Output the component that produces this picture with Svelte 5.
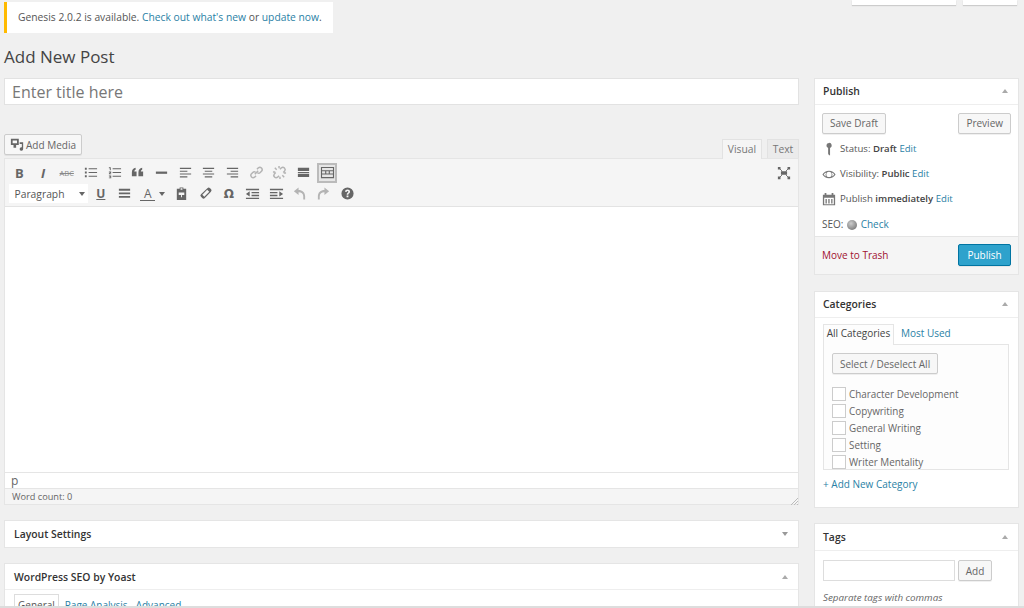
<script>
  const linkPath = 'M6.2 9.800l3.600-3.600M8.500 4.500 10 3a2.500 2.500 0 0 1 3.500 3.500L12 8a2.500 2.500 0 0 1-3 .4M7.500 11.500 6 13a2.500 2.500 0 0 1-3.500-3.500L4 8a2.500 2.500 0 0 1 3-.4';
  const unlinkPath = 'M8.500 4.500 10 3a2.500 2.500 0 0 1 3.500 3.500L12 8M7.500 11.500 6 13a2.500 2.500 0 0 1-3.500-3.500L4 8M3 3l2 2M11 11l2 2M7.500 1v2.500M8.500 12.500V15M1 7.500h2.500M12.500 8.500H15';

  const rowOne = [
    { text: 'B', cls: 'bold' },
    { text: 'I', cls: 'ital' },
    { text: 'ABC', cls: 'strike' },
    { d: 'M2 3h2v2H2zM6 3.500h9v1H6zM2 7h2v2H2zM6 7.500h9v1H6zM2 11h2v2H2zM6 11.500h9v1H6z' },
    { d: 'M2 2.500h2v3H3v-2H2zM6 3.500h9v1H6zM2 7h2.500v1.200L3.200 9h1.300v.8H2V9l1.400-1H2zM6 7.500h9v1H6zM2 11.200h2.500V14H2v-.7h1.600v-.4H2.600v-.6h1v-.4H2zM6 11.500h9v1H6z' },
    { d: 'M2 8c0-3 1.500-4.600 4-5v2C5 5.300 4.600 6 4.600 7H7v5H2zM9 8c0-3 1.500-4.600 4-5v2c-1 .3-1.400 1-1.400 2H14v5H9z' },
    { d: 'M2 7h12v2.400H2z' },
    { d: 'M2 3h12v1.200H2zM2 6h8v1.200H2zM2 9h12v1.200H2zM2 12h8v1.200H2z' },
    { d: 'M2 3h12v1.200H2zM4 6h8v1.200H4zM2 9h12v1.200H2zM4 12h8v1.200H4z' },
    { d: 'M2 3h12v1.200H2zM6 6h8v1.200H6zM2 9h12v1.200H2zM6 12h8v1.200H6z' },
    { line: linkPath },
    { line: unlinkPath },
    { d: 'M2 3h12v3.500H2zM2 7.400h12v1H2zM2 9.400h12v3.500H2z' },
    { d: 'M1 2h14v12H1zM2.200 3.200v2.300h11.600V3.200zM2.200 6.700v2.300h3.300V6.700zM6.700 6.700v2.300h2.600V6.700zM10.500 6.700v2.300h3.300V6.700zM2.200 10.200v2.600h11.600v-2.600z', active: true }
  ];

  const rowTwo = [
    { text: 'U', cls: 'under' },
    { d: 'M2 3h12v2H2zM2 6.800h12v2H2zM2 10.600h12v2H2z' },
    { text: 'A', cls: 'color', caret: true },
    { d: 'M6 1.500h4V3h3v12H3V3h3zM7 2.500V4h2V2.500zM5 7v2.500h2.500V12h1V9.500H11V7z' },
    { d: 'M10 2.300a2 2 0 0 1 2.800 0l1 1a2 2 0 0 1 0 2.800l-6.500 6.700a2 2 0 0 1-2.800 0l-1.300-1.300a2 2 0 0 1 0-2.800zM9.800 4 4.600 9.400l2.100 2 5.300-5.300z' },
    { text: 'Ω', cls: 'omega' },
    { d: 'M1 3h14v1.400H1zM7 6.400h8v1.400H7zM7 9.400h8v1.400H7zM1 12.400h14v1.400H1zM5 5.600v5.600L1 8.400z' },
    { d: 'M1 3h14v1.400H1zM1 6.400h8v1.400H1zM1 9.400h8v1.400H1zM1 12.400h14v1.400H1zM11 5.600v5.600l4-2.800z' },
    { d: 'M2 5.500 7 1.500v2.800c4 0 7 2.500 7 6.700v3.500h-2V11c0-2.700-2-4.300-5-4.300v3z', off: true },
    { d: 'M14 5.500 9 1.500v2.800c-4 0-7 2.500-7 6.700v3.500h2V11c0-2.700 2-4.300 5-4.300v3z', off: true },
    { d: 'M8 1.500a6.500 6.500 0 1 0 0 13 6.500 6.500 0 0 0 0-13zM7 10.200h2V12H7zM5.400 6.200C5.500 4.600 6.500 3.800 8 3.800c1.600 0 2.700.9 2.700 2.200 0 1-.5 1.500-1.200 2-.5.400-.6.600-.6 1.400H7.200c0-1.200.2-1.700 1-2.300.5-.4.700-.6.700-1 0-.4-.3-.7-.9-.7-.6 0-.9.300-1 1z' }
  ];

  const categories = ['Character Development', 'Copywriting', 'General Writing', 'Setting', 'Writer Mentality'];
</script>

<div class="page">
  <div class="screen-meta">
    <span class="meta-tab first"></span>
    <span class="meta-tab second"></span>
  </div>

  <div class="notice">
    Genesis 2.0.2 is available. <a href="#a">Check out what's new</a> or <a href="#b">update now</a>.
  </div>

  <h1>Add New Post</h1>

  <div class="columns">
    <main class="main-col">
      <div class="title-input">Enter title here</div>

      <div class="media-row">
        <button class="btn media-btn">
          <svg viewBox="0 0 16 16" width="16" height="16"><path fill="#666" fill-rule="evenodd" d="M1 1h9v7H7v3H4V8H1zM3 3v3h5V3zM11 5h4v7.500a2 2 0 1 1-1.500-1.900V7H11z"/></svg>
          Add Media
        </button>
        <div class="tabs">
          <span class="tab on">Visual</span>
          <span class="tab">Text</span>
        </div>
      </div>

      <section class="editor">
        <div class="toolbar">
          <div class="tb-row">
            {#each rowOne as b}
              <span class="tb" class:active={b.active} class:off={b.line}>
                {#if b.text}
                  <span class={b.cls}>{b.text}</span>
                {:else if b.line}
                  <svg viewBox="0 0 16 16" width="15" height="15"><path class="chain" d={b.line}/></svg>
                {:else}
                  <svg viewBox="0 0 16 16" width="15" height="15"><path fill-rule="evenodd" d={b.d}/></svg>
                {/if}
              </span>
            {/each}
            <span class="tb fullscreen">
              <svg viewBox="0 0 16 16" width="14" height="14"><path d="M1 1h3v3H1zM12 1h3v3h-3zM1 12h3v3H1zM12 12h3v3h-3zM4.500 6h7v4h-7z"/><path d="M3 3l3 3M13 3l-3 3M3 13l3-3M13 13l-3-3" stroke="#666" stroke-width="1"/></svg>
            </span>
          </div>
          <div class="tb-row">
            <span class="select">Paragraph<i class="caret"></i></span>
            <span class="tb-gap"></span>
            {#each rowTwo as b}
              <span class="tb" class:off={b.off} class:wide={b.caret}>
                {#if b.text}
                  <span class={b.cls}>{b.text}</span>
                  {#if b.caret}<i class="caret small"></i>{/if}
                {:else}
                  <svg viewBox="0 0 16 16" width="15" height="15"><path fill-rule="evenodd" d={b.d}/></svg>
                {/if}
              </span>
            {/each}
          </div>
        </div>
        <div class="edit-area"></div>
        <div class="path-row">p</div>
        <div class="status-row">
          Word count: 0
          <svg class="grip" viewBox="0 0 8 8" width="8" height="8"><path d="M8 1 1 8M8 4 4 8M8 7 7 8" stroke="#bbb" stroke-width="1"/></svg>
        </div>
      </section>

      <section class="box layout-box">
        <header class="box-head"><h2>Layout Settings</h2><i class="arrow down"></i></header>
      </section>

      <section class="box">
        <header class="box-head lined"><h2>WordPress SEO by Yoast</h2><i class="arrow"></i></header>
        <div class="seo-tabs">
          <span class="seo-tab on">General</span>
          <a href="#c">Page Analysis</a>
          <a href="#d">Advanced</a>
        </div>
      </section>
    </main>

    <aside class="side-col">
      <section class="box publish">
        <header class="box-head lined"><h2>Publish</h2><i class="arrow"></i></header>
        <div class="pub-buttons">
          <button class="btn">Save Draft</button>
          <button class="btn">Preview</button>
        </div>
        <div class="pub-row">
          <svg viewBox="0 0 16 16" width="14" height="14"><path d="M8 1a3 3 0 0 1 1.200 5.800V15H8l-1-1.500V6.800A3 3 0 0 1 8 1z"/></svg>
          <span>Status: <b>Draft</b> <a href="#e">Edit</a></span>
        </div>
        <div class="pub-row">
          <svg viewBox="0 0 16 16" width="14" height="14"><path fill-rule="evenodd" d="M0.500 8.500C2 5.800 4.800 4.200 8 4.200s6 1.600 7.500 4.300C14 11.200 11.200 12.800 8 12.800S2 11.200.5 8.500zM8 5.500a3 3 0 1 0 0 6 3 3 0 0 0 0-6zM2 8.500c.7 1 1.700 1.800 2.800 2.300a4.500 4.500 0 0 1 0-4.600C3.700 6.700 2.700 7.500 2 8.500zM14 8.500c-.7-1-1.700-1.800-2.800-2.300a4.500 4.500 0 0 1 0 4.600c1.100-.5 2.100-1.300 2.800-2.300z"/></svg>
          <span>Visibility: <b>Public</b> <a href="#f">Edit</a></span>
        </div>
        <div class="pub-row">
          <svg viewBox="0 0 16 16" width="14" height="14"><path fill-rule="evenodd" d="M3 1h2v2h6V1h2v2h2v12H1V3h2zM2.500 6.500V14h11V6.500zM4 8h1.500v5H4zM7.200 8h1.500v5H7.200zM10.500 8H12v5h-1.500z"/></svg>
          <span>Publish <b>immediately</b> <a href="#g">Edit</a></span>
        </div>
        <div class="pub-row seo">
          <span>SEO: <i class="ball"></i> <a href="#h">Check</a></span>
        </div>
        <div class="pub-foot">
          <a class="trash" href="#i">Move to Trash</a>
          <button class="btn primary">Publish</button>
        </div>
      </section>

      <section class="box cats">
        <header class="box-head lined"><h2>Categories</h2><i class="arrow"></i></header>
        <div class="cat-body">
          <div class="cat-tabs">
            <span class="cat-tab on">All Categories</span>
            <a href="#j">Most Used</a>
          </div>
          <div class="cat-panel">
            <button class="btn select-all">Select / Deselect All</button>
            <ul>
              {#each categories as c}
                <li><span class="check"></span>{c}</li>
              {/each}
            </ul>
          </div>
          <a class="add-cat" href="#k">+ Add New Category</a>
        </div>
      </section>

      <section class="box tags">
        <header class="box-head lined"><h2>Tags</h2><i class="arrow"></i></header>
        <div class="tag-body">
          <div class="tag-row">
            <span class="tag-input"></span>
            <button class="btn">Add</button>
          </div>
          <em>Separate tags with commas</em>
        </div>
      </section>
    </aside>
  </div>
  <div class="bottom-line"></div>
</div>

<style>
  :global(body) {
    margin: 0;
    background: #f1f1f1;
  }

  .page {
    position: relative;
    width: 1024px;
    height: 608px;
    overflow: hidden;
    background: #f0f0f0;
    color: #555;
    font-family: "Open Sans", sans-serif;
    font-size: 10.3px;
    line-height: 14px;
  }

  a {
    color: #2a7fa5;
    text-decoration: none;
  }

  .screen-meta {
    position: absolute;
    top: 0;
    right: 7px;
    display: flex;
    gap: 7px;
  }

  .meta-tab {
    height: 5px;
    background: #fff;
    box-shadow: 0 1px 1px rgba(0, 0, 0, 0.15);
  }

  .meta-tab.first {
    width: 104px;
  }

  .meta-tab.second {
    width: 54px;
  }

  .notice {
    margin: 2px 0 0 4px;
    width: 329px;
    height: 31px;
    box-sizing: border-box;
    padding: 8px 0 0 11px;
    background: #fff;
    border-left: 3px solid #ffba00;
  }

  h1 {
    margin: 14px 0 0 4px;
    height: 20px;
    font-size: 17px;
    line-height: 20px;
    font-weight: 400;
    color: #444;
  }

  .columns {
    display: flex;
    gap: 15px;
    margin: 11px 0 0 4px;
    align-items: flex-start;
  }

  .main-col {
    width: 795px;
    flex-shrink: 0;
  }

  .side-col {
    width: 205px;
    flex-shrink: 0;
  }

  .title-input {
    height: 27px;
    box-sizing: border-box;
    padding: 0 7px;
    border: 1px solid #e2e2e2;
    background: #fff;
    color: #777;
    font-size: 16px;
    line-height: 27px;
  }

  .media-row {
    display: flex;
    justify-content: space-between;
    align-items: flex-end;
    margin-top: 29px;
    height: 24px;
  }

  .btn {
    height: 21px;
    padding: 0 7px;
    border: 1px solid #ccc;
    border-radius: 2px;
    background: #f7f7f7;
    box-shadow: 0 1px 0 rgba(0, 0, 0, 0.06);
    color: #666;
    font-family: inherit;
    font-size: 10px;
    line-height: 18px;
    white-space: nowrap;
  }

  .media-btn {
    display: flex;
    align-items: center;
    gap: 2px;
    padding: 0 5px;
    width: 78px;
    margin-bottom: 3px;
    color: #666;
  }

  .tabs {
    display: flex;
    gap: 5px;
    position: relative;
    top: 1px;
  }

  .tab {
    width: 40px;
    height: 19px;
    box-sizing: border-box;
    border: 1px solid #e2e2e2;
    border-bottom: none;
    background: #ebebeb;
    color: #777;
    text-align: center;
    line-height: 19px;
  }

  .tab.on {
    background: #f5f5f5;
    height: 20px;
  }

  .tab:last-child {
    width: 32px;
  }

  .editor {
    border: 1px solid #e5e5e5;
    background: #f5f5f5;
    height: 347px;
    box-sizing: border-box;
    display: flex;
    flex-direction: column;
  }

  .toolbar {
    height: 48px;
    flex-shrink: 0;
    padding: 3px 0 0 2.5px;
    box-sizing: border-box;
    border-bottom: 1px solid #e3e3e3;
  }

  .tb-row {
    display: flex;
    align-items: center;
    height: 21px;
  }

  .tb {
    position: relative;
    display: flex;
    align-items: center;
    justify-content: center;
    width: 23.7px;
    height: 20px;
    flex-shrink: 0;
    color: #666;
    fill: #666;
    font-size: 13px;
  }

  .tb.off {
    fill: #b4b4b4;
  }

  .chain {
    fill: none;
    stroke: #b4b4b4;
    stroke-width: 1.6;
  }

  .tb.wide {
    width: 33.2px;
    justify-content: flex-start;
    padding-left: 4px;
    box-sizing: border-box;
  }

  .tb.active {
    width: 20px;
    margin-left: 2px;
    box-sizing: border-box;
    border: 2px solid #bbb;
    background: #e6e6e6;
  }

  .tb.fullscreen {
    margin-left: auto;
    margin-right: 2px;
  }

  .bold {
    font-weight: 700;
    font-size: 13px;
  }

  .ital {
    font-style: italic;
    font-weight: 700;
    font-size: 13px;
  }

  .strike {
    font-size: 7.5px;
    color: #888;
    text-decoration: line-through;
  }

  .under {
    text-decoration: underline;
    font-weight: 700;
    font-size: 12px;
  }

  .color {
    font-size: 12px;
    border-bottom: 1px solid #666;
    line-height: 13px;
    padding: 0 3.5px;
  }

  .omega {
    font-family: "DejaVu Sans", sans-serif;
    font-size: 12px;
    font-weight: 700;
  }

  .caret {
    display: inline-block;
    width: 0;
    height: 0;
    border-left: 3px solid transparent;
    border-right: 3px solid transparent;
    border-top: 4px solid #666;
  }

  .caret.small {
    position: absolute;
    right: 5px;
    top: 8px;
  }

  .select {
    display: flex;
    align-items: center;
    justify-content: space-between;
    width: 79px;
    height: 19px;
    box-sizing: border-box;
    padding: 0 3px 0 6px;
    margin-left: 1px;
    background: #fff;
    color: #555;
    flex-shrink: 0;
  }

  .tb-gap {
    width: 1.5px;
    flex-shrink: 0;
  }

  .edit-area {
    height: 266px;
    flex-shrink: 0;
    background: #fff;
    border-bottom: 1px solid #e5e5e5;
    box-sizing: border-box;
  }

  .path-row {
    height: 16px;
    flex-shrink: 0;
    background: #fff;
    padding-left: 6px;
    font-size: 12px;
    line-height: 15px;
    color: #666;
    border-bottom: 1px solid #e5e5e5;
    box-sizing: border-box;
  }

  .status-row {
    position: relative;
    flex: 1;
    padding: 0 7px;
    font-size: 9.2px;
    line-height: 16px;
    color: #666;
  }

  .grip {
    position: absolute;
    right: 0;
    bottom: 0;
  }

  .box {
    background: #fff;
    border: 1px solid #e5e5e5;
    box-sizing: border-box;
  }

  .box h2 {
    margin: 0;
    font-size: 10.4px;
    line-height: 14px;
    font-weight: 600;
    color: #333;
  }

  .layout-box {
    margin: 15px 0;
    height: 28px;
  }

  .box-head {
    display: flex;
    align-items: center;
    justify-content: space-between;
    height: 26px;
    padding: 0 10px 0 9px;
    box-sizing: border-box;
  }

  .box-head.lined {
    border-bottom: 1px solid #eee;
  }

  .side-col .box-head {
    padding: 0 10px 1px 8px;
    height: 26px;
  }

  .arrow {
    width: 0;
    height: 0;
    border-left: 3px solid transparent;
    border-right: 3px solid transparent;
    border-bottom: 4px solid #aaa;
  }

  .arrow.down {
    border-bottom: none;
    border-top: 4px solid #999;
  }

  .seo-tabs {
    display: flex;
    gap: 6px;
    align-items: flex-end;
    height: 30px;
    padding: 4px 0 0 9px;
    box-sizing: border-box;
    font-size: 10px;
  }

  .seo-tab {
    border: 1px solid #ddd;
    border-bottom: none;
    padding: 3px 3px 8px;
  }

  .seo-tabs a {
    padding-bottom: 8px;
  }

  .seo-tabs a:last-child {
    margin-left: 2px;
  }

  .publish {
    height: 197px;
    display: flex;
    flex-direction: column;
  }

  .pub-buttons {
    display: flex;
    justify-content: space-between;
    padding: 8px 7px 0 7px;
    margin-bottom: 2px;
  }

  .pub-buttons .btn {
    padding-bottom: 1px;
  }

  .pub-row {
    display: flex;
    align-items: center;
    gap: 4px;
    height: 25.3px;
    flex-shrink: 0;
    padding-left: 7px;
    fill: #777;
    color: #555;
    font-size: 9.6px;
  }

  .pub-row b {
    font-weight: 600;
    color: #444;
  }

  .pub-row svg {
    flex-shrink: 0;
  }

  .pub-row.seo {
    height: 24px;
    font-size: 10px;
  }

  .ball {
    display: inline-block;
    width: 10px;
    height: 10px;
    border-radius: 50%;
    background: radial-gradient(circle at 40% 35%, #ccc, #666);
    vertical-align: -2px;
    margin: 0 1px;
  }

  .pub-foot {
    flex: 1;
    display: flex;
    align-items: center;
    justify-content: space-between;
    padding: 0 7px;
    background: #f5f5f5;
    border-top: 1px solid #e5e5e5;
    font-size: 10px;
  }

  .trash {
    color: #a0102f;
  }

  .primary {
    width: 53px;
    height: 22px;
    padding: 0;
    background: #2ea2cc;
    border-color: #0074a2;
    color: #fff;
  }

  .cats {
    margin-top: 16px;
    height: 217px;
  }

  .cat-body {
    padding: 5px 8px 0;
  }

  .cat-tabs {
    display: flex;
    align-items: flex-end;
    height: 21px;
    position: relative;
    top: 1px;
  }

  .cat-tab {
    height: 21px;
    width: 71px;
    box-sizing: border-box;
    border: 1px solid #e5e5e5;
    border-bottom: none;
    background: #fdfdfd;
    text-align: center;
    line-height: 16px;
    font-size: 10px;
    color: #444;
    position: relative;
    z-index: 1;
  }

  .cat-tabs a {
    padding: 0 0 5px 7px;
    font-size: 10px;
  }

  .cat-panel {
    height: 126px;
    width: 186px;
    box-sizing: border-box;
    border: 1px solid #e5e5e5;
    background: #fdfdfd;
    padding: 8px 8px 0;
    overflow: hidden;
  }

  .select-all {
    height: 21px;
    color: #666;
  }

  .cat-panel ul {
    list-style: none;
    margin: 11px 0 0;
    padding: 0;
  }

  .cat-panel li {
    display: flex;
    align-items: center;
    gap: 3px;
    height: 17.2px;
    font-size: 9.9px;
    color: #666;
  }

  .check {
    width: 12px;
    height: 12px;
    border: 1px solid #ccc;
    background: #fff;
    box-sizing: content-box;
    flex-shrink: 0;
  }

  .add-cat {
    display: block;
    margin-top: 7px;
    font-size: 10px;
  }

  .tags {
    margin-top: 15px;
    height: 120px;
  }

  .tags .box-head {
    height: 27px;
  }

  .tag-body {
    padding: 9px 8px 0;
    color: #666;
    font-size: 9.8px;
  }

  .tag-row {
    display: flex;
    gap: 3px;
    margin-bottom: 10px;
  }

  .tag-input {
    width: 132px;
    height: 21px;
    box-sizing: border-box;
    border: 1px solid #ddd;
    background: #fff;
  }

  .tag-row .btn {
    width: 34px;
    padding: 0;
  }

  .bottom-line {
    position: absolute;
    left: 0;
    right: 0;
    bottom: 0;
    height: 2px;
    background: #ddd;
  }
</style>
